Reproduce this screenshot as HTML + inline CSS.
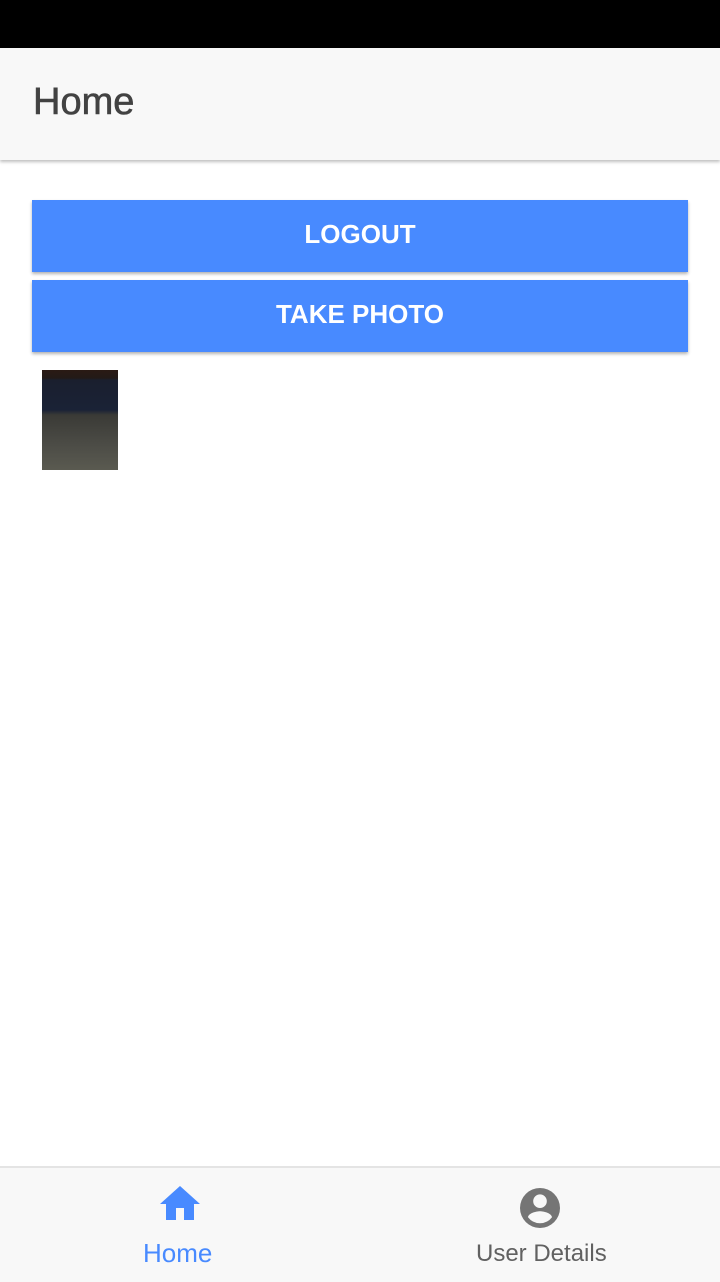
<!DOCTYPE html><html><head><style>
body{margin:0;width:720px;height:1280px;position:relative;background:#fff;font-family:"Liberation Sans",sans-serif;overflow:hidden}
.sb{position:absolute;top:0;left:0;width:720px;height:48px;background:#000}
.hd{position:absolute;top:48px;left:0;width:720px;height:112px;background:#f8f8f8;box-shadow:0 2px 3px rgba(0,0,0,.25)}
.hd span{position:absolute;left:33px;top:33px;font-size:38px;color:#424242;-webkit-text-stroke:0.6px #424242}
.btn{position:absolute;left:32px;width:656px;height:72px;background:#488aff;color:#fff;font-size:26px;font-weight:bold;text-align:center;line-height:68px;box-shadow:0 2px 3px rgba(0,0,0,.3)}
.ph{position:absolute;left:42px;top:370px;width:76px;height:100px;background:linear-gradient(#2a1a14 0,#231a17 8%,#1a1f2e 10%,#1a2236 40%,#3a3a36 45%,#4c4c46 75%,#5a5a50 100%)}
.tb{position:absolute;top:1166px;left:0;width:720px;height:114px;background:#f8f8f8;border-top:2px solid #e4e4e4}
.lbl{position:absolute;font-size:26px}
</style></head><body>
<div class="sb"></div>
<div class="hd"><span>Home</span></div>
<div class="btn" style="top:200px">LOGOUT</div>
<div class="btn" style="top:280px">TAKE PHOTO</div>
<div class="ph"></div>
<div class="tb">
<svg style="position:absolute;left:156px;top:12px" width="48" height="48" viewBox="0 0 24 24"><path fill="#488aff" d="M10 20v-6h4v6h5v-8h3L12 3 2 12h3v8z"/></svg>
<div class="lbl" style="left:143px;top:70px;color:#488aff">Home</div>
<svg style="position:absolute;left:516px;top:16px" width="48" height="48" viewBox="0 0 24 24"><path fill="#757575" d="M12 2a10 10 0 100 20 10 10 0 000-20zm0 3.2a3.4 3.4 0 110 6.8 3.4 3.4 0 010-6.8zM12 19.6a7.6 7.6 0 01-6-3c.2-2 4-3 6-3s5.8 1 6 3a7.6 7.6 0 01-6 3z"/></svg>
<div class="lbl" style="left:476px;top:72px;color:#616161;font-size:24px">User Details</div>
</div>
</body></html>
